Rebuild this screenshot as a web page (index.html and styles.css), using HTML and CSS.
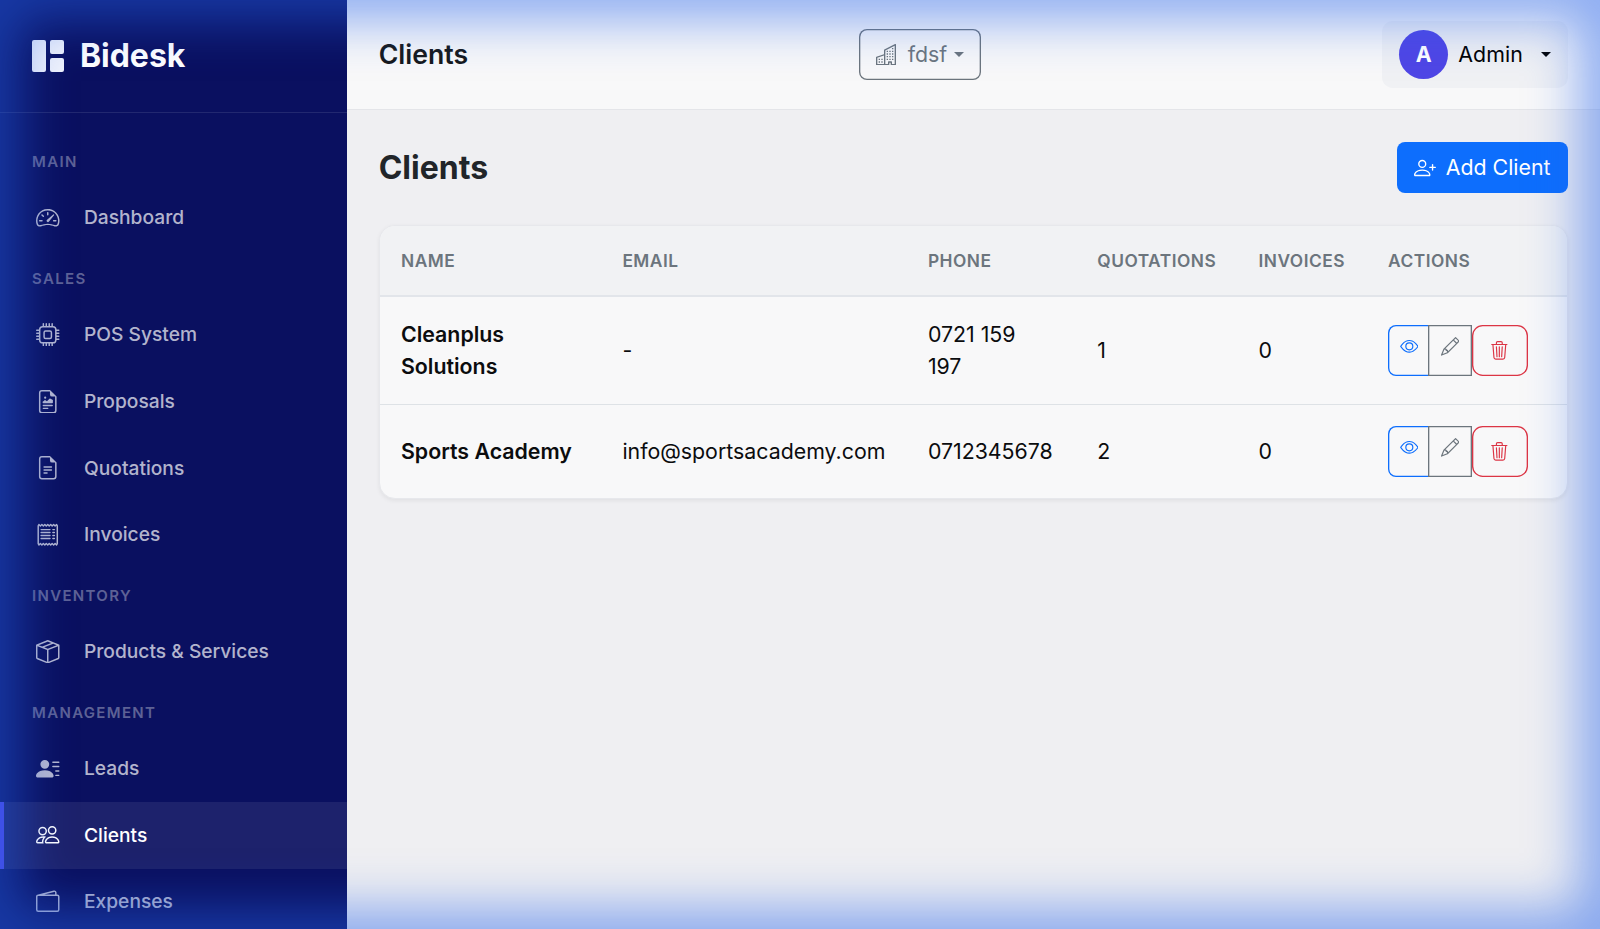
FILE: index.html
```html
<!DOCTYPE html>
<html lang="en">
<head>
<meta charset="utf-8">
<title>Clients - Bidesk</title>
<link rel="stylesheet" href="styles.css">
</head>
<body>
<div class="app">
  <aside class="sidebar">
    <div class="brand">
      <svg class="brand-icon" viewBox="0 0 16 16" fill="currentColor"><path d="M0 1a1 1 0 0 1 1-1h5a1 1 0 0 1 1 1v14a1 1 0 0 1-1 1H1a1 1 0 0 1-1-1zm9 0a1 1 0 0 1 1-1h5a1 1 0 0 1 1 1v5a1 1 0 0 1-1 1h-5a1 1 0 0 1-1-1zm0 9a1 1 0 0 1 1-1h5a1 1 0 0 1 1 1v5a1 1 0 0 1-1 1h-5a1 1 0 0 1-1-1z"/></svg>
      <span class="brand-name">Bidesk</span>
    </div>
    <nav class="nav">
      <div class="nav-label">Main</div>
      <a class="nav-item"><span class="nav-icon"><svg viewBox="0 0 16 16" fill="currentColor"><path d="M8 4a.5.5 0 0 1 .5.5V6a.5.5 0 0 1-1 0V4.5A.5.5 0 0 1 8 4M3.732 5.732a.5.5 0 0 1 .707 0l.915.914a.5.5 0 1 1-.708.708l-.914-.915a.5.5 0 0 1 0-.707M2 10a.5.5 0 0 1 .5-.5h1.586a.5.5 0 0 1 0 1H2.5A.5.5 0 0 1 2 10m9.5 0a.5.5 0 0 1 .5-.5h1.5a.5.5 0 0 1 0 1H12a.5.5 0 0 1-.5-.5m.754-4.246a.39.39 0 0 0-.527-.02L7.547 9.31a.91.91 0 1 0 1.302 1.258l3.434-4.297a.39.39 0 0 0-.029-.518z"/><path fill-rule="evenodd" d="M0 10a8 8 0 1 1 15.547 2.661c-.442 1.253-1.845 1.602-2.932 1.25C11.309 13.488 9.475 13 8 13c-1.474 0-3.31.488-4.615.911-1.087.352-2.49.003-2.932-1.25A8 8 0 0 1 0 10m8-7a7 7 0 0 0-6.603 9.329c.203.575.923.876 1.68.63C4.397 12.533 6.358 12 8 12s3.604.532 4.923.96c.757.245 1.477-.056 1.68-.631A7 7 0 0 0 8 3"/></svg></span>Dashboard</a>
      <div class="nav-label">Sales</div>
      <a class="nav-item"><span class="nav-icon"><svg viewBox="0 0 16 16" fill="currentColor"><path d="M5 0a.5.5 0 0 1 .5.5V2h1V.5a.5.5 0 0 1 1 0V2h1V.5a.5.5 0 0 1 1 0V2h1V.5a.5.5 0 0 1 1 0V2A2.5 2.5 0 0 1 14 4.5h1.5a.5.5 0 0 1 0 1H14v1h1.5a.5.5 0 0 1 0 1H14v1h1.5a.5.5 0 0 1 0 1H14v1h1.5a.5.5 0 0 1 0 1H14a2.5 2.5 0 0 1-2.5 2.5v1.5a.5.5 0 0 1-1 0V14h-1v1.5a.5.5 0 0 1-1 0V14h-1v1.5a.5.5 0 0 1-1 0V14h-1v1.5a.5.5 0 0 1-1 0V14A2.5 2.5 0 0 1 2 11.5H.5a.5.5 0 0 1 0-1H2v-1H.5a.5.5 0 0 1 0-1H2v-1H.5a.5.5 0 0 1 0-1H2v-1H.5a.5.5 0 0 1 0-1H2A2.5 2.5 0 0 1 4.5 2V.5A.5.5 0 0 1 5 0m-.5 3A1.5 1.5 0 0 0 3 4.5v7A1.5 1.5 0 0 0 4.5 13h7a1.5 1.5 0 0 0 1.5-1.5v-7A1.5 1.5 0 0 0 11.5 3zM5 6.5A1.5 1.5 0 0 1 6.5 5h3A1.5 1.5 0 0 1 11 6.5v3A1.5 1.5 0 0 1 9.5 11h-3A1.5 1.5 0 0 1 5 9.5zM6.5 6a.5.5 0 0 0-.5.5v3a.5.5 0 0 0 .5.5h3a.5.5 0 0 0 .5-.5v-3a.5.5 0 0 0-.5-.5z"/></svg></span>POS System</a>
      <a class="nav-item"><span class="nav-icon"><svg viewBox="0 0 16 16" fill="currentColor"><path d="M14 4.5V14a2 2 0 0 1-2 2H4a2 2 0 0 1-2-2V2a2 2 0 0 1 2-2h5.5zm-3 0A1.5 1.5 0 0 1 9.5 3V1H4a1 1 0 0 0-1 1v12a1 1 0 0 0 1 1h8a1 1 0 0 0 1-1V4.5z"/><path d="M4.5 12.5A.5.5 0 0 1 5 12h3a.5.5 0 0 1 0 1H5a.5.5 0 0 1-.5-.5m0-2A.5.5 0 0 1 5 10h6a.5.5 0 0 1 0 1H5a.5.5 0 0 1-.5-.5m1.639-3.708 1.33.886 1.854-1.855a.25.25 0 0 1 .289-.047l1.888.974V8.5a.5.5 0 0 1-.5.5H5a.5.5 0 0 1-.5-.5V8s1.54-1.274 1.639-1.208M6.25 6a.75.75 0 1 0 0-1.5.75.75 0 0 0 0 1.5"/></svg></span>Proposals</a>
      <a class="nav-item"><span class="nav-icon"><svg viewBox="0 0 16 16" fill="currentColor"><path d="M5.5 7a.5.5 0 0 0 0 1h5a.5.5 0 0 0 0-1zM5 9.5a.5.5 0 0 1 .5-.5h5a.5.5 0 0 1 0 1h-5a.5.5 0 0 1-.5-.5m0 2a.5.5 0 0 1 .5-.5h2a.5.5 0 0 1 0 1h-2a.5.5 0 0 1-.5-.5"/><path d="M9.5 0H4a2 2 0 0 0-2 2v12a2 2 0 0 0 2 2h8a2 2 0 0 0 2-2V4.5zm0 1v2A1.5 1.5 0 0 0 11 4.5h2V14a1 1 0 0 1-1 1H4a1 1 0 0 1-1-1V2a1 1 0 0 1 1-1z"/></svg></span>Quotations</a>
      <a class="nav-item"><span class="nav-icon"><svg viewBox="0 0 16 16" fill="currentColor"><path d="M1.92.506a.5.5 0 0 1 .434.14L3 1.293l.646-.647a.5.5 0 0 1 .708 0L5 1.293l.646-.647a.5.5 0 0 1 .708 0L7 1.293l.646-.647a.5.5 0 0 1 .708 0L9 1.293l.646-.647a.5.5 0 0 1 .708 0l.646.647.646-.647a.5.5 0 0 1 .708 0l.646.647.646-.647a.5.5 0 0 1 .801.13l.5 1A.5.5 0 0 1 15 2v12a.5.5 0 0 1-.053.224l-.5 1a.5.5 0 0 1-.8.13L13 14.707l-.646.647a.5.5 0 0 1-.708 0L11 14.707l-.646.647a.5.5 0 0 1-.708 0L9 14.707l-.646.647a.5.5 0 0 1-.708 0L7 14.707l-.646.647a.5.5 0 0 1-.708 0L5 14.707l-.646.647a.5.5 0 0 1-.708 0L3 14.707l-.646.647a.5.5 0 0 1-.801-.13l-.5-1A.5.5 0 0 1 1 14V2a.5.5 0 0 1 .053-.224l.5-1a.5.5 0 0 1 .367-.27m.217 1.338L2 2.118v11.764l.137.274.51-.51a.5.5 0 0 1 .707 0l.646.647.646-.646a.5.5 0 0 1 .708 0l.646.646.646-.646a.5.5 0 0 1 .708 0l.646.646.646-.646a.5.5 0 0 1 .708 0l.646.646.646-.646a.5.5 0 0 1 .708 0l.646.646.646-.646a.5.5 0 0 1 .708 0l.509.509.137-.274V2.118l-.137-.274-.51.51a.5.5 0 0 1-.707 0L12 1.707l-.646.647a.5.5 0 0 1-.708 0L10 1.707l-.646.647a.5.5 0 0 1-.708 0L8 1.707l-.646.647a.5.5 0 0 1-.708 0L6 1.707l-.646.647a.5.5 0 0 1-.708 0L4 1.707l-.646.647a.5.5 0 0 1-.708 0z"/><path d="M3 4.5a.5.5 0 0 1 .5-.5h6a.5.5 0 1 1 0 1h-6a.5.5 0 0 1-.5-.5m0 2a.5.5 0 0 1 .5-.5h6a.5.5 0 1 1 0 1h-6a.5.5 0 0 1-.5-.5m0 2a.5.5 0 0 1 .5-.5h6a.5.5 0 1 1 0 1h-6a.5.5 0 0 1-.5-.5m0 2a.5.5 0 0 1 .5-.5h6a.5.5 0 0 1 0 1h-6a.5.5 0 0 1-.5-.5M11.5 4a.5.5 0 0 0 0 1h1a.5.5 0 0 0 0-1zm0 2a.5.5 0 0 0 0 1h1a.5.5 0 0 0 0-1zm0 2a.5.5 0 0 0 0 1h1a.5.5 0 0 0 0-1zm0 2a.5.5 0 0 0 0 1h1a.5.5 0 0 0 0-1z"/></svg></span>Invoices</a>
      <div class="nav-label">Inventory</div>
      <a class="nav-item"><span class="nav-icon"><svg viewBox="0 0 16 16" fill="currentColor"><path d="M8.186 1.113a.5.5 0 0 0-.372 0L1.846 3.5l2.404.961L10.404 2zm3.564 1.426L5.596 5 8 5.961 14.154 3.5zm3.25 1.7-6.5 2.6v7.922l6.5-2.6V4.24zM7.5 14.762V6.838L1 4.239v7.925zM7.443.184a1.5 1.5 0 0 1 1.114 0l7.129 2.852A.5.5 0 0 1 16 3.5v8.662a1 1 0 0 1-.629.928l-7.185 2.874a.5.5 0 0 1-.372 0L.63 13.09a1 1 0 0 1-.63-.928V3.5a.5.5 0 0 1 .314-.464z"/></svg></span>Products &amp; Services</a>
      <div class="nav-label">Management</div>
      <a class="nav-item"><span class="nav-icon"><svg viewBox="0 0 16 16" fill="currentColor"><path d="M6 8a3 3 0 1 0 0-6 3 3 0 0 0 0 6m-5 6s-1 0-1-1 1-4 6-4 6 3 6 4-1 1-1 1zM11 3.5a.5.5 0 0 1 .5-.5h4a.5.5 0 0 1 0 1h-4a.5.5 0 0 1-.5-.5m.5 2.5a.5.5 0 0 0 0 1h4a.5.5 0 0 0 0-1zm2 3a.5.5 0 0 0 0 1h2a.5.5 0 0 0 0-1zm0 3a.5.5 0 0 0 0 1h2a.5.5 0 0 0 0-1z"/></svg></span>Leads</a>
      <a class="nav-item is-active"><span class="nav-icon"><svg viewBox="0 0 16 16" fill="currentColor"><path d="M15 14s1 0 1-1-1-4-5-4-5 3-5 4 1 1 1 1zm-7.978-1L7 12.996c.001-.264.167-1.03.76-1.72C8.312 10.629 9.282 10 11 10c1.717 0 2.687.63 3.24 1.276.593.69.758 1.457.76 1.72l-.008.002-.014.002zM11 7a2 2 0 1 0 0-4 2 2 0 0 0 0 4m3-2a3 3 0 1 1-6 0 3 3 0 0 1 6 0M6.936 9.28a6 6 0 0 0-1.23-.247A7 7 0 0 0 5 9c-4 0-5 3-5 4q0 1 1 1h4.216A2.24 2.24 0 0 1 5 13c0-1.01.377-2.042 1.09-2.904.243-.294.526-.569.846-.816M4.92 10A5.5 5.5 0 0 0 4 13H1c0-.26.164-1.03.76-1.724.545-.636 1.492-1.256 3.16-1.275ZM1.5 5.5a3 3 0 1 1 6 0 3 3 0 0 1-6 0m3-2a2 2 0 1 0 0 4 2 2 0 0 0 0-4"/></svg></span>Clients</a>
      <a class="nav-item"><span class="nav-icon"><svg viewBox="0 0 16 16" fill="currentColor"><path d="M12.136.326A1.5 1.5 0 0 1 14 1.78V3h.5A1.5 1.5 0 0 1 16 4.5v9a1.5 1.5 0 0 1-1.5 1.5h-13A1.5 1.5 0 0 1 0 13.5v-9a1.5 1.5 0 0 1 1.432-1.499zM5.562 3H13V1.78a.5.5 0 0 0-.621-.484zM1.5 4a.5.5 0 0 0-.5.5v9a.5.5 0 0 0 .5.5h13a.5.5 0 0 0 .5-.5v-9a.5.5 0 0 0-.5-.5z"/></svg></span>Expenses</a>
    </nav>
  </aside>

  <div class="main">
    <header class="topbar">
      <div class="topbar-title">Clients</div>
      <button class="company-btn">
        <svg class="company-icon" viewBox="0 0 16 16" fill="currentColor"><path d="M14.763.075A.5.5 0 0 1 15 .5v15a.5.5 0 0 1-.5.5h-3a.5.5 0 0 1-.5-.5V14h-1v1.5a.5.5 0 0 1-.5.5h-9a.5.5 0 0 1-.5-.5V10a.5.5 0 0 1 .342-.474L6 7.64V4.5a.5.5 0 0 1 .276-.447l8-4a.5.5 0 0 1 .487.022M6 8.694 1 10.36V15h5zM7 15h2v-1.5a.5.5 0 0 1 .5-.5h2a.5.5 0 0 1 .5.5V15h2V1.309l-7 3.5z"/><path d="M2 11h1v1H2zm2 0h1v1H4zm-2 2h1v1H2zm2 0h1v1H4zm4-4h1v1H8zm2 0h1v1h-1zm-2 2h1v1H8zm2 0h1v1h-1zm2-2h1v1h-1zm0 2h1v1h-1zM8 7h1v1H8zm2 0h1v1h-1zm2 0h1v1h-1zM8 5h1v1H8zm2 0h1v1h-1zm2 0h1v1h-1zm0-2h1v1h-1z"/></svg>
        <span class="company-name">fdsf</span><i class="caret"></i>
      </button>
      <div class="user-menu">
        <span class="avatar">A</span>
        <span class="user-name">Admin</span>
        <i class="caret caret-dark"></i>
      </div>
    </header>

    <main class="content">
      <div class="page-head">
        <h1 class="page-title">Clients</h1>
        <button class="add-btn">
          <svg class="add-icon" viewBox="0 0 16 16" fill="currentColor"><path d="M6 8a3 3 0 1 0 0-6 3 3 0 0 0 0 6m2-3a2 2 0 1 1-4 0 2 2 0 0 1 4 0m4 8c0 1-1 1-1 1H1s-1 0-1-1 1-4 6-4 6 3 6 4m-1-.004c-.001-.246-.154-.986-.832-1.664C9.516 10.68 8.289 10 6 10s-3.516.68-4.168 1.332c-.678.678-.83 1.418-.832 1.664z"/><path fill-rule="evenodd" d="M13.5 5a.5.5 0 0 1 .5.5V7h1.5a.5.5 0 0 1 0 1H14v1.5a.5.5 0 0 1-1 0V8h-1.5a.5.5 0 0 1 0-1H13V5.5a.5.5 0 0 1 .5-.5"/></svg>
          Add Client
        </button>
      </div>

      <div class="card">
        <table class="clients">
          <colgroup>
            <col class="col-name"><col class="col-email"><col class="col-phone"><col class="col-quot"><col class="col-inv"><col class="col-act">
          </colgroup>
          <thead>
            <tr><th>Name</th><th>Email</th><th>Phone</th><th>Quotations</th><th>Invoices</th><th>Actions</th></tr>
          </thead>
          <tbody>
            <tr>
              <td class="name">Cleanplus Solutions</td>
              <td>-</td>
              <td>0721 159 197</td>
              <td>1</td>
              <td>0</td>
              <td>
                <div class="actions">
                  <button class="act act-view"><svg viewBox="0 0 16 16" fill="currentColor"><path d="M16 8s-3-5.5-8-5.5S0 8 0 8s3 5.5 8 5.5S16 8 16 8M1.173 8a13 13 0 0 1 1.66-2.043C4.12 4.668 5.88 3.5 8 3.5s3.879 1.168 5.168 2.457A13 13 0 0 1 14.828 8q-.086.13-.195.288c-.335.48-.83 1.12-1.465 1.755C11.879 11.332 10.119 12.5 8 12.5s-3.879-1.168-5.168-2.457A13 13 0 0 1 1.172 8z"/><path d="M8 5.5a2.5 2.5 0 1 0 0 5 2.5 2.5 0 0 0 0-5M4.5 8a3.5 3.5 0 1 1 7 0 3.5 3.5 0 0 1-7 0"/></svg></button>
                  <button class="act act-edit"><svg viewBox="0 0 16 16" fill="currentColor"><path d="M12.146.146a.5.5 0 0 1 .708 0l3 3a.5.5 0 0 1 0 .708l-10 10a.5.5 0 0 1-.168.11l-5 2a.5.5 0 0 1-.65-.65l2-5a.5.5 0 0 1 .11-.168zM11.207 2.5 13.5 4.793 14.793 3.5 12.5 1.207zm1.586 3L10.5 3.207 4 9.707V10h.5a.5.5 0 0 1 .5.5v.5h.5a.5.5 0 0 1 .5.5v.5h.293zm-9.761 5.175-.106.106-1.528 3.821 3.821-1.528.106-.106A.5.5 0 0 1 5 12.5V12h-.5a.5.5 0 0 1-.5-.5V11h-.5a.5.5 0 0 1-.468-.325"/></svg></button>
                  <button class="act act-del"><svg viewBox="0 0 16 16" fill="currentColor"><path d="M6.5 1h3a.5.5 0 0 1 .5.5v1H6v-1a.5.5 0 0 1 .5-.5M11 2.5v-1A1.5 1.5 0 0 0 9.5 0h-3A1.5 1.5 0 0 0 5 1.5v1H1.5a.5.5 0 0 0 0 1h.538l.853 10.66A2 2 0 0 0 4.885 16h6.23a2 2 0 0 0 1.994-1.84l.853-10.66h.538a.5.5 0 0 0 0-1zm1.958 1-.846 10.58a1 1 0 0 1-.997.92h-6.23a1 1 0 0 1-.997-.92L3.042 3.5zm-7.487 1a.5.5 0 0 1 .528.47l.5 8.5a.5.5 0 0 1-.998.06L5 5.03a.5.5 0 0 1 .47-.53Zm5.058 0a.5.5 0 0 1 .47.53l-.5 8.5a.5.5 0 1 1-.998-.06l.5-8.5a.5.5 0 0 1 .528-.47M8 4.5a.5.5 0 0 1 .5.5v8.5a.5.5 0 0 1-1 0V5a.5.5 0 0 1 .5-.5"/></svg></button>
                </div>
              </td>
            </tr>
            <tr>
              <td class="name">Sports Academy</td>
              <td>info@sportsacademy.com</td>
              <td>0712345678</td>
              <td>2</td>
              <td>0</td>
              <td>
                <div class="actions">
                  <button class="act act-view"><svg viewBox="0 0 16 16" fill="currentColor"><path d="M16 8s-3-5.5-8-5.5S0 8 0 8s3 5.5 8 5.5S16 8 16 8M1.173 8a13 13 0 0 1 1.66-2.043C4.12 4.668 5.88 3.5 8 3.5s3.879 1.168 5.168 2.457A13 13 0 0 1 14.828 8q-.086.13-.195.288c-.335.48-.83 1.12-1.465 1.755C11.879 11.332 10.119 12.5 8 12.5s-3.879-1.168-5.168-2.457A13 13 0 0 1 1.172 8z"/><path d="M8 5.5a2.5 2.5 0 1 0 0 5 2.5 2.5 0 0 0 0-5M4.5 8a3.5 3.5 0 1 1 7 0 3.5 3.5 0 0 1-7 0"/></svg></button>
                  <button class="act act-edit"><svg viewBox="0 0 16 16" fill="currentColor"><path d="M12.146.146a.5.5 0 0 1 .708 0l3 3a.5.5 0 0 1 0 .708l-10 10a.5.5 0 0 1-.168.11l-5 2a.5.5 0 0 1-.65-.65l2-5a.5.5 0 0 1 .11-.168zM11.207 2.5 13.5 4.793 14.793 3.5 12.5 1.207zm1.586 3L10.5 3.207 4 9.707V10h.5a.5.5 0 0 1 .5.5v.5h.5a.5.5 0 0 1 .5.5v.5h.293zm-9.761 5.175-.106.106-1.528 3.821 3.821-1.528.106-.106A.5.5 0 0 1 5 12.5V12h-.5a.5.5 0 0 1-.5-.5V11h-.5a.5.5 0 0 1-.468-.325"/></svg></button>
                  <button class="act act-del"><svg viewBox="0 0 16 16" fill="currentColor"><path d="M6.5 1h3a.5.5 0 0 1 .5.5v1H6v-1a.5.5 0 0 1 .5-.5M11 2.5v-1A1.5 1.5 0 0 0 9.5 0h-3A1.5 1.5 0 0 0 5 1.5v1H1.5a.5.5 0 0 0 0 1h.538l.853 10.66A2 2 0 0 0 4.885 16h6.23a2 2 0 0 0 1.994-1.84l.853-10.66h.538a.5.5 0 0 0 0-1zm1.958 1-.846 10.58a1 1 0 0 1-.997.92h-6.23a1 1 0 0 1-.997-.92L3.042 3.5zm-7.487 1a.5.5 0 0 1 .528.47l.5 8.5a.5.5 0 0 1-.998.06L5 5.03a.5.5 0 0 1 .47-.53Zm5.058 0a.5.5 0 0 1 .47.53l-.5 8.5a.5.5 0 1 1-.998-.06l.5-8.5a.5.5 0 0 1 .528-.47M8 4.5a.5.5 0 0 1 .5.5v8.5a.5.5 0 0 1-1 0V5a.5.5 0 0 1 .5-.5"/></svg></button>
                </div>
              </td>
            </tr>
          </tbody>
        </table>
      </div>
    </main>
  </div>
</div>
<div class="edge-glow"></div>
</body>
</html>
```

FILE: styles.css
```css
* { box-sizing: border-box; }

html, body {
  margin: 0;
  height: 100%;
  overflow: hidden;
}

body {
  font-family: Inter, "Liberation Sans", sans-serif;
  font-size: 21.33px;
  line-height: 1.5;
  color: #0b0c0e;
  background: #efeff2;
}

button {
  font: inherit;
  background: none;
  cursor: pointer;
}

.app {
  display: flex;
  height: 929px;
  overflow: hidden;
}

/* Sidebar */
.sidebar {
  flex: 0 0 346.67px;
  background: #0a1060;
  color: rgba(255, 255, 255, 0.7);
  overflow: hidden;
}

.brand {
  display: flex;
  align-items: center;
  gap: 16px;
  height: 113px;
  padding: 0 32px;
  color: #f2f4fc;
  border-bottom: 1.33px solid rgba(255, 255, 255, 0.1);
}

.brand-icon {
  width: 32px;
  height: 32px;
}

.brand-name {
  font-size: 32px;
  font-weight: 700;
  letter-spacing: -0.05px;
  color: #fff;
}

.nav {
  padding-top: 21px;
}

.nav-label {
  height: 50.33px;
  padding: 16px 32px 0;
  font-size: 15px;
  font-weight: 600;
  line-height: 24px;
  letter-spacing: 1.33px;
  text-transform: uppercase;
  color: rgba(255, 255, 255, 0.35);
}

.nav-item {
  display: flex;
  align-items: center;
  gap: 20px;
  height: 66.67px;
  padding-left: 28px;
  border-left: 4px solid transparent;
  font-size: 19.2px;
  font-weight: 500;
}

.nav-item.is-active {
  background: rgba(255, 255, 255, 0.08);
  border-left-color: #4f46e5;
  color: #fff;
}

.nav-icon {
  display: flex;
  justify-content: center;
  flex: 0 0 32px;
}

.nav-icon svg {
  width: 23.5px;
  height: 23.5px;
}

/* Main column */
.main {
  flex: 1;
  min-width: 0;
  display: flex;
  flex-direction: column;
}

.topbar {
  flex: 0 0 110px;
  display: flex;
  align-items: center;
  justify-content: space-between;
  padding: 0 32px;
  background: #f8f8f9;
  border-bottom: 1.33px solid #e4e5e9;
}

.topbar-title {
  flex: 0 0 auto;
  padding-bottom: 2px;
  font-size: 26.67px;
  font-weight: 600;
  color: #16181b;
}

.company-btn {
  display: flex;
  align-items: center;
  height: 50.67px;
  margin-right: 11px;
  padding: 0 17px;
  border: 0;
  border-radius: 8px;
  box-shadow: inset 0 0 0 1.33px #6c757d;
  color: #6c757d;
}

.company-icon {
  width: 21.33px;
  height: 21.33px;
}

.company-name {
  margin: 0 6.5px 0 10.67px;
}

.caret {
  width: 0;
  height: 0;
  border-top: 5.6px solid currentColor;
  border-left: 5.6px solid transparent;
  border-right: 5.6px solid transparent;
}

.user-menu {
  display: flex;
  align-items: center;
  gap: 10px;
  height: 66.67px;
  padding: 0 17px;
  border-radius: 10.67px;
  background: #f0f1f4;
}

.avatar {
  display: flex;
  align-items: center;
  justify-content: center;
  width: 49px;
  height: 49px;
  border-radius: 50%;
  background: #4f46e5;
  color: #fff;
  font-weight: 700;
  font-size: 21.33px;
}

.user-name {
  font-weight: 400;
  letter-spacing: 0.1px;
  color: #000;
}

.caret-dark {
  margin-left: 8px;
  color: #000;
}

/* Page content */
.content {
  flex: 1;
  padding: 32px;
}

.page-head {
  display: flex;
  align-items: center;
  justify-content: space-between;
  margin-bottom: 32px;
}

.page-title {
  margin: 0;
  padding-top: 2px;
  font-size: 32px;
  font-weight: 700;
  line-height: 1.2;
  color: #212529;
}

.add-btn {
  display: flex;
  align-items: center;
  gap: 10px;
  height: 50.67px;
  padding: 2px 17.5px 0 17px;
  border: 0;
  border-radius: 8px;
  background: #0d6efd;
  color: #fff;
}

.add-icon {
  width: 22px;
  height: 22px;
}

.card {
  overflow: hidden;
  border: 1.33px solid #e7e8ec;
  border-radius: 16px;
  background: #f8f8f9;
  box-shadow: 0 1.33px 4px rgba(0, 0, 0, 0.06);
}

.clients {
  width: 100%;
  table-layout: fixed;
  border-collapse: collapse;
}

.col-name { width: 221.4px; }
.col-email { width: 305.5px; }
.col-phone { width: 169.4px; }
.col-quot { width: 161.2px; }
.col-inv { width: 129.6px; }
.col-act { width: auto; }

.clients th {
  height: 70.5px;
  padding: 2px 21.33px 0;
  text-align: left;
  white-space: nowrap;
  font-size: 17.33px;
  font-weight: 600;
  letter-spacing: 0.5px;
  text-transform: uppercase;
  color: #6c757d;
  background: #f1f2f4;
  border-bottom: 2px solid #e2e5ea;
}

.clients td {
  padding: 22.33px 21.33px 20.33px;
  vertical-align: middle;
  border-bottom: 1.33px solid #dee2e6;
}

.clients td:last-child {
  padding: 21.33px;
}

.clients tr:last-child td {
  border-bottom: 0;
}

.clients .name {
  font-weight: 600;
}

.actions {
  display: flex;
}

.act {
  display: flex;
  align-items: center;
  justify-content: center;
  height: 50.67px;
  width: 41.67px;
  padding: 0;
  border: 0;
  box-shadow: inset 0 0 0 1.33px currentColor;
}

.act svg {
  width: 18.67px;
  height: 18.67px;
}

.act-view {
  padding-bottom: 8px;
  color: #0d6efd;
  border-radius: 8px 0 0 8px;
}

.act-edit {
  width: 43.33px;
  margin-left: -1.33px;
  padding-bottom: 8px;
  background: #f8f8f9;
  color: #6c757d;
  border-radius: 0;
}

.act-del {
  width: 55.5px;
  margin-left: 0.33px;
  color: #dc3545;
  border-radius: 10.67px;
}

/* Viewport edge highlight */
.edge-glow {
  position: fixed;
  inset: 0;
  pointer-events: none;
  box-shadow: inset 0 0 50px 21px rgba(37, 99, 235, 0.5);
}
```
